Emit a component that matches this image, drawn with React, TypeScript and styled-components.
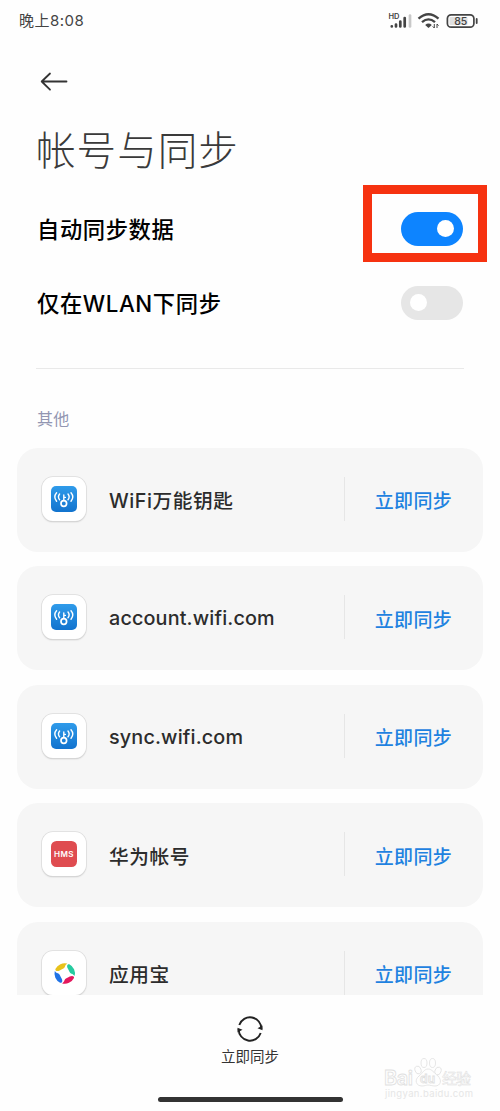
import React from "react";
import styled, { createGlobalStyle } from "styled-components";

const Global = createGlobalStyle`
  * { box-sizing: border-box; }
  body { margin: 0; background: #fefefe; }
`;

const Screen = styled.main`
  position: relative;
  display: flex;
  flex-direction: column;
  width: 500px;
  height: 1111px;
  overflow: hidden;
  background: #fefefe;
  color: #2c2c2c;
  font-family: Inter, "Noto Sans CJK SC", sans-serif;
`;

const StatusBar = styled.header`
  display: flex;
  align-items: center;
  justify-content: space-between;
  height: 42px;
  padding: 0 21px 0 19px;
`;

const Clock = styled.span`
  font-size: 15px;
  line-height: 20px;
  letter-spacing: 0.5px;
  color: #444;
`;

const StatusIcons = styled.svg`
  display: block;
  width: 92px;
  height: 22px;
`;

const BackButton = styled.button`
  display: flex;
  align-items: center;
  height: 40px;
  margin: 20px 0 0 40px;
  padding: 0;
  border: 0;
  background: none;
  color: #333;
`;

const Title = styled.h1`
  margin: 16px 0 0 36px;
  height: 60px;
  font-size: 39.6px;
  line-height: 60px;
  font-weight: 300;
  font-family: "Noto Sans CJK SC", sans-serif;
  letter-spacing: 1px;
  color: #3a3a3a;
`;

const Settings = styled.section`
  display: flex;
  flex-direction: column;
  margin: 14px 36px 0;
  height: 177px;
  border-bottom: 1.5px solid #e9e9e9;
`;

const SettingRow = styled.label`
  position: relative;
  display: flex;
  align-items: center;
  justify-content: space-between;
  height: 74px;
  padding: 0 1px;
  font-size: 22.3px;
  font-weight: 500;
  letter-spacing: 0.6px;
  color: #000;
`;

const SettingName = styled.span`
  padding-bottom: 2px;
`;

const Toggle = styled.span<{ $on?: boolean }>`
  display: flex;
  align-items: center;
  justify-content: ${(p) => (p.$on ? "flex-end" : "flex-start")};
  width: 62px;
  height: 34px;
  margin-bottom: 1px;
  padding: 0 9px;
  border-radius: 17px;
  background: ${(p) => (p.$on ? "#0d84ff" : "#e6e6e6")};
`;

const Knob = styled.span`
  width: 17px;
  height: 17px;
  border-radius: 50%;
  background: #fff;
`;

const Highlight = styled.span`
  position: absolute;
  top: -7px;
  right: -23px;
  width: 124px;
  height: 77px;
  border: 9px solid #f63210;
`;

const SectionLabel = styled.h2`
  margin: 38px 0 0 37px;
  height: 24px;
  font-size: 16px;
  line-height: 24px;
  font-weight: 400;
  letter-spacing: 0.3px;
  color: #9296b2;
`;

const List = styled.ul`
  display: flex;
  flex-direction: column;
  gap: 14.7px;
  height: 547px;
  margin: 17px 17px 0;
  padding: 0;
  overflow: hidden;
  list-style: none;
`;

const Card = styled.li`
  display: flex;
  flex: none;
  align-items: center;
  height: 103.8px;
  padding: 0 31px 0 25px;
  border-radius: 21px;
  background: #f6f6f6;
`;

const IconTile = styled.span`
  display: grid;
  place-items: center;
  width: 44px;
  height: 44px;
  margin-top: -2px;
  border-radius: 11px;
  background: #fff;
  box-shadow: 0 0 0 0.7px #dcdcdc, 0 1px 1.5px #bbb;
`;

const AccountName = styled.span<{ $latin?: boolean }>`
  flex: 1;
  margin-left: 23px;
  font-size: ${(p) => (p.$latin ? "19.8px" : "19.7px")};
  font-weight: ${(p) => (p.$latin ? 450 : 500)};
  letter-spacing: ${(p) => (p.$latin ? "0.15px" : "0.55px")};
`;

const SyncAction = styled.button`
  display: flex;
  align-items: center;
  height: 44px;
  margin-top: -2px;
  padding: 2px 0 0 30px;
  border: 0;
  border-left: 1px solid #e6e6e6;
  background: none;
  font: inherit;
  font-size: 19px;
  font-weight: 500;
  letter-spacing: 0.3px;
  color: #1f82e0;
`;

const Footer = styled.footer`
  display: flex;
  flex: 1;
  flex-direction: column;
  align-items: center;
  padding-top: 20px;
`;

const FooterLabel = styled.span`
  margin-top: 3px;
  font-size: 14.5px;
  line-height: 22px;
  color: #333;
`;

const HomeBar = styled.span`
  width: 185px;
  height: 5px;
  margin-top: 29px;
  border-radius: 3px;
  background: #333;
`;

const Watermark = styled.svg`
  position: absolute;
  left: 380px;
  top: 1052px;
  width: 100px;
  height: 54px;
`;

const KeyIcon = () => (
  <svg width="26" height="26" viewBox="0 0 26 26">
    <defs>
      <linearGradient id="key" x1="0" y1="0" x2="0" y2="1">
        <stop offset="0" stopColor="#2f9bea" />
        <stop offset="1" stopColor="#1273ce" />
      </linearGradient>
    </defs>
    <rect width="26" height="26" rx="5" fill="url(#key)" />
    <g fill="none" stroke="#fff" strokeWidth="1.4" strokeLinecap="round">
      <circle cx="12.8" cy="17.5" r="2.8" strokeWidth="1.7" />
      <path d="M12.8 14.6V9M12.8 11.4h1.6" />
      <path d="M8.6 8c-1.4 1.7-1.4 4 0 5.8M5.6 6.8c-2.2 2.6-2.2 5.8 0 8.4M17 8c1.4 1.7 1.4 4 0 5.8M20 6.8c2.2 2.6 2.2 5.8 0 8.4" />
    </g>
  </svg>
);

const HmsIcon = () => (
  <svg width="26" height="26" viewBox="0 0 26 26">
    <rect width="26" height="26" rx="5.5" fill="#df4c50" />
    <text x="13" y="15.8" textAnchor="middle" textLength="20" lengthAdjust="spacingAndGlyphs" fontFamily="Inter, sans-serif" fontSize="7.5" fontWeight="600" letterSpacing="0.4" fill="#fff">HMS</text>
  </svg>
);

const petal = "M15.6 3.1A10.3 10.3 0 0 0 3.7 8.4C3.2 10.6 5.8 11.2 8 9.9C10.4 8.4 12.6 8.2 13.2 6.2C13.6 4.8 14.4 3.9 15.6 3.1Z";
const PinwheelIcon = () => (
  <svg width="26" height="26" viewBox="0 0 26 26">
    {["#e8c21c", "#26cba0", "#e4175d", "#2073e6"].map((color, i) => (
      <path key={color} d={petal} fill={color} transform={`translate(0.7 0.5) rotate(${i * 90} 13 13)`} />
    ))}
  </svg>
);

const accounts = [
  { name: "WiFi万能钥匙", Icon: KeyIcon },
  { name: "account.wifi.com", Icon: KeyIcon, latin: true },
  { name: "sync.wifi.com", Icon: KeyIcon, latin: true },
  { name: "华为帐号", Icon: HmsIcon },
  { name: "应用宝", Icon: PinwheelIcon },
];

export default function App() {
  return (
    <Screen>
      <Global />
      <StatusBar>
        <Clock>晚上8:08</Clock>
        <StatusIcons viewBox="387 10 92 22">
          <text x="388.5" y="18.5" fontSize="7" fontWeight="600" textLength="11" lengthAdjust="spacingAndGlyphs" fill="#444">HD</text>
          <g strokeWidth="2.7" stroke="#444" strokeLinecap="round">
            <path d="M391.8 26.3v0.2M396 24.5v2M400.3 21.5v5M404.7 18v8.5" />
            <path d="M410 15.5v11" stroke="#c8c8c8" />
          </g>
          <g fill="none" stroke="#444" strokeWidth="2.3">
            <path d="M418.5 18.6Q428.5 9.8 438.5 18.6M422 22.2Q428.5 16.6 435 22.2" />
            <path d="M425.2 24.9Q428.5 22.3 431.8 24.9L428.5 28Z" fill="#444" stroke="none" />
            <path d="M434.3 24v4l-1.6-1.6M437 28v-4l1.6 1.6" strokeWidth="1" />
          </g>
          <rect x="447.4" y="14.8" width="26.5" height="12.4" rx="3.8" fill="none" stroke="#444" strokeWidth="1.7" />
          <rect x="449.5" y="17" width="18" height="8" rx="1" fill="#e0e0e0" />
          <path d="M476.7 19v4" stroke="#444" strokeWidth="1.8" strokeLinecap="round" />
          <text x="460.8" y="25" textAnchor="middle" fontSize="10.5" fontWeight="500" textLength="13" fill="#444">85</text>
        </StatusIcons>
      </StatusBar>
      <BackButton aria-label="返回">
        <svg width="28" height="20" viewBox="0 0 28 20" fill="none" stroke="currentColor" strokeWidth="1.8" strokeLinecap="round" strokeLinejoin="round">
          <path d="M26.5 9.5H1.7M10 1.5L1.7 9.5L10 17.7" />
        </svg>
      </BackButton>
      <Title>帐号与同步</Title>
      <Settings>
        <SettingRow>
          <SettingName>自动同步数据</SettingName>
          <Toggle $on><Knob /></Toggle>
          <Highlight />
        </SettingRow>
        <SettingRow>
          <SettingName>仅在WLAN下同步</SettingName>
          <Toggle><Knob /></Toggle>
        </SettingRow>
      </Settings>
      <SectionLabel>其他</SectionLabel>
      <List>
        {accounts.map(({ name, Icon, latin }) => (
          <Card key={name}>
            <IconTile><Icon /></IconTile>
            <AccountName $latin={latin}>{name}</AccountName>
            <SyncAction>立即同步</SyncAction>
          </Card>
        ))}
      </List>
      <Footer>
        <svg width="28" height="28" viewBox="0 0 28 28" fill="none" stroke="#222" strokeWidth="1.9">
          <path d="M3.3 10A11.3 11.3 0 0 1 25.3 14M24.7 18A11.3 11.3 0 0 1 2.7 14" />
          <path d="M21.5 13.2l5 2V10.5ZM6.5 14.8l-5-2V17.5Z" fill="#222" stroke="none" />
        </svg>
        <FooterLabel>立即同步</FooterLabel>
        <HomeBar />
      </Footer>
      <Watermark viewBox="380 1052 100 54" fill="#fefefe" stroke="#e0e0e0" strokeWidth="0.8">
        <text x="384" y="1085" fontSize="20" fontWeight="600" textLength="29">Bai</text>
        <ellipse cx="418" cy="1070" rx="3" ry="4" transform="rotate(-20 418 1070)" />
        <ellipse cx="424" cy="1063" rx="3" ry="4.5" />
        <ellipse cx="432.5" cy="1063" rx="3" ry="4.5" />
        <ellipse cx="438" cy="1071" rx="3" ry="4" transform="rotate(20 438 1071)" />
        <path d="M428 1069c-4 0-5 4-9 7c-5 4-3 10 3 10c3 0 4-1 6-1s4 1 7 1c6 0 7-6 3-10c-4-3-6-7-10-7Z" />
        <text x="420" y="1083" fontSize="12" fontWeight="600" textLength="15">du</text>
        <text x="442" y="1084" fontSize="15" textLength="29" strokeWidth="0.5">经验</text>
        <text x="385" y="1097" fontSize="9.5" textLength="88" fill="#e6e6e6" stroke="none">jingyan.baidu.com</text>
      </Watermark>
    </Screen>
  );
}
